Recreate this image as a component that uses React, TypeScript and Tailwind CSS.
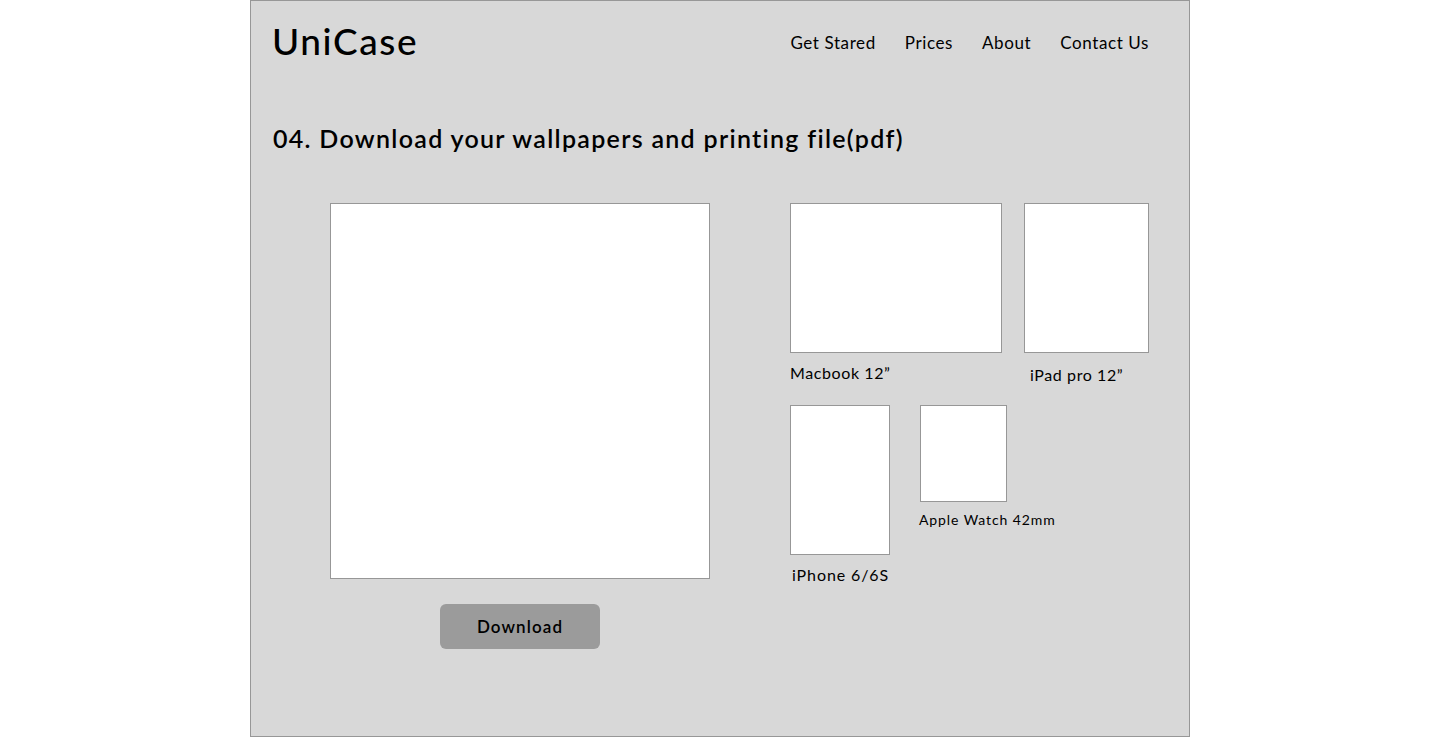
import React from 'react';

const navItems = ['Get Stared', 'Prices', 'About', 'Contact Us'];

const Frame = ({ className }: { className: string }) => (
    <div className={`bg-white border border-[#979797] ${className}`} />
);

export default function App() {
    return (
        <div className="w-full min-h-[737px] bg-white font-['Lato',sans-serif] text-black">
            <div className="w-[940px] h-[737px] mx-auto bg-[#d8d8d8] border border-[#979797]">
                {/* Header */}
                <header className="flex items-center justify-between pl-[21px] pr-[40px] pt-[18px]">
                    <div className="text-[37px] leading-[44px] font-medium tracking-[1.6px]">UniCase</div>
                    <nav className="flex items-center gap-[29px] text-[17px] leading-[24px] tracking-[0.6px] pt-[3px]">
                        {navItems.map(item => (
                            <a key={item} className="cursor-pointer">{item}</a>
                        ))}
                    </nav>
                </header>

                {/* Title */}
                <h1 className="pl-[22px] mt-[59px] text-[25px] leading-[32px] font-semibold tracking-[1.3px]">
                    04. Download your wallpapers and printing file(pdf)
                </h1>

                {/* Content */}
                <div className="flex mt-[49px] pl-[79px]">
                    <div className="flex flex-col items-center w-[380px]">
                        <Frame className="w-[380px] h-[376px]" />
                        <button className="mt-[25px] w-[160px] h-[45px] rounded-[6px] bg-[#9b9b9b] text-[17px] font-semibold tracking-[1.1px]">
                            Download
                        </button>
                    </div>

                    <div className="flex flex-col ml-[80px]">
                        <div className="flex">
                            <div className="flex flex-col">
                                <Frame className="w-[212px] h-[150px]" />
                                <span className="mt-[9px] text-[16px] leading-[22px] tracking-[0.6px]">Macbook 12”</span>
                            </div>
                            <div className="flex flex-col ml-[22px]">
                                <Frame className="w-[125px] h-[150px]" />
                                <span className="mt-[11px] ml-[6px] text-[16px] leading-[22px] tracking-[0.6px]">iPad pro 12”</span>
                            </div>
                        </div>
                        <div className="flex mt-[19px]">
                            <div className="flex flex-col">
                                <Frame className="w-[100px] h-[150px]" />
                                <span className="mt-[9px] ml-[2px] text-[16px] leading-[22px] tracking-[0.9px]">iPhone 6/6S</span>
                            </div>
                            <div className="flex flex-col ml-[30px]">
                                <Frame className="w-[87px] h-[97px]" />
                                <span className="mt-[8px] -ml-[1px] text-[14px] leading-[20px] tracking-[0.9px]">Apple Watch 42mm</span>
                            </div>
                        </div>
                    </div>
                </div>
            </div>
        </div>
    );
}
